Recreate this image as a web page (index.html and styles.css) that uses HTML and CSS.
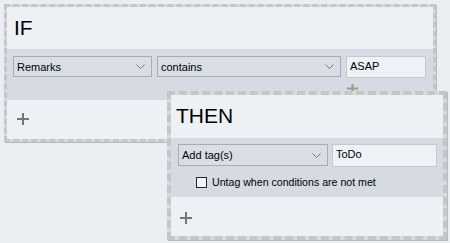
FILE: index.html
```html
<!DOCTYPE html>
<html lang="en">
<head>
    <meta charset="UTF-8">
    <title>Tag rule</title>
    <link rel="stylesheet" href="styles.css">
</head>
<body>
    <!-- IF block -->
    <div class="panel panel-if">
        <div class="panel-head">IF</div>
        <div class="panel-band">
            <div class="row">
                <div class="combo combo-field">
                    <span>Remarks</span>
                    <svg class="chev" width="9" height="5" viewBox="0 0 9 5"><polyline points="0.5,0.5 4.5,4.5 8.5,0.5" fill="none" stroke="#7a7a7a" stroke-width="1"/></svg>
                </div>
                <div class="combo combo-op">
                    <span>contains</span>
                    <svg class="chev" width="9" height="5" viewBox="0 0 9 5"><polyline points="0.5,0.5 4.5,4.5 8.5,0.5" fill="none" stroke="#7a7a7a" stroke-width="1"/></svg>
                </div>
                <div class="textbox textbox-value">ASAP</div>
            </div>
            <div class="add-small">
                <svg width="11" height="9" viewBox="0 0 11 9"><path d="M0 4.5H11M5.5 0V9" stroke="#9a9f86" stroke-width="2"/></svg>
            </div>
        </div>
        <div class="panel-foot">
            <svg class="add" width="12" height="12" viewBox="0 0 12 12"><path d="M0 6H12M6 0V12" stroke="#757575" stroke-width="2"/></svg>
        </div>
    </div>

    <!-- THEN block, dragged over the IF block -->
    <div class="panel panel-then">
        <div class="panel-head">THEN</div>
        <div class="panel-band">
            <div class="row">
                <div class="combo combo-action">
                    <span>Add tag(s)</span>
                    <svg class="chev" width="9" height="5" viewBox="0 0 9 5"><polyline points="0.5,0.5 4.5,4.5 8.5,0.5" fill="none" stroke="#7a7a7a" stroke-width="1"/></svg>
                </div>
                <div class="textbox textbox-tag">ToDo</div>
            </div>
            <label class="check">
                <span class="box"></span>
                Untag when conditions are not met
            </label>
        </div>
        <div class="panel-foot">
            <svg class="add" width="12" height="12" viewBox="0 0 12 12"><path d="M0 6H12M6 0V12" stroke="#757575" stroke-width="2"/></svg>
        </div>
    </div>
</body>
</html>
```

FILE: styles.css
```css
body {
    margin: 0;
    padding: 4px;
    background-color: #eaedf1;
    font-family: "Liberation Sans", Arial, sans-serif;
    font-size: 11px;
    color: #000;
}

.panel {
    border: 3px dashed #c4c6c9;
    background-color: #d9dadc;
    box-shadow: 1px 1px 0 #b9bbbe;
    display: flex;
    flex-direction: column;
}

.panel > div {
    background-color: #edf0f4;
}

.panel-if {
    width: 426px;
    height: 132px;
}

.panel-then {
    position: absolute;
    left: 167px;
    top: 91px;
    width: 272px;
    height: 141px;
    border-width: 4px;
}

.panel-head {
    font-size: 21px;
    padding-left: 7px;
    line-height: 24px;
    padding-top: 9px;
}

.panel-if .panel-head {
    height: 33px;
}

.panel-then .panel-head {
    height: 34px;
    padding-left: 5px;
    padding-top: 9px;
}

.panel > .panel-band {
    background-color: #d6dbe3;
}

.panel-if .panel-band {
    height: 51px;
    padding: 7px 7px 0 6px;
    box-sizing: border-box;
}

.panel-then .panel-band {
    height: 59px;
    padding: 6px 5px 0 7px;
    box-sizing: border-box;
}

.row {
    display: flex;
    gap: 5px;
}

.panel-then .row {
    gap: 4px;
}

.combo {
    height: 21px;
    box-sizing: border-box;
    border: 1px solid #a9abae;
    background-color: #d9dee6;
    display: flex;
    align-items: center;
    justify-content: space-between;
    padding: 0 6px 0 3px;
}

.combo-field {
    width: 139px;
}

.combo-op {
    width: 184px;
}

.combo-action {
    width: 150px;
    height: 22px;
}

.textbox {
    height: 22px;
    box-sizing: border-box;
    border: 1px solid #c6c9cd;
    background-color: #eef1f5;
    padding: 3px 0 0 3px;
}

.textbox-value {
    width: 80px;
}

.textbox-tag {
    width: 105px;
    height: 23px;
}

.add-small {
    display: flex;
    padding-left: 334px;
    padding-top: 6px;
}

.check {
    display: flex;
    align-items: center;
    gap: 5px;
    margin: 9px 0 0 18px;
    font-size: 10.6px;
}

.check .box {
    width: 11px;
    height: 11px;
    border: 1px solid #2b2430;
    background-color: #f3f4f6;
    box-sizing: border-box;
}

.panel-foot {
    flex: 1;
    padding: 13px 0 0 10px;
}

.panel-then .panel-foot {
    padding: 15px 0 0 9px;
}

.add {
    display: block;
}
```
